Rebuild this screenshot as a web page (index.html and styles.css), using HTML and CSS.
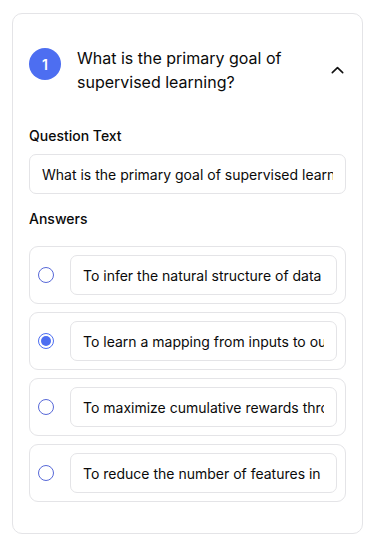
FILE: index.html
```html
<!DOCTYPE html>
<html lang="en">
<head>
<meta charset="utf-8">
<title>Question editor</title>
<link rel="stylesheet" href="styles.css">
</head>
<body>
<div class="page">
  <section class="card">
    <header class="card-header">
      <div class="header-left">
        <span class="badge">1</span>
        <h2 class="title">What is the primary goal of supervised learning?</h2>
      </div>
      <button class="toggle" type="button" aria-label="Collapse">
        <svg width="20" height="20" viewBox="0 0 20 20" fill="none" stroke="#111" stroke-width="1.6" stroke-linecap="round" stroke-linejoin="round"><path d="M6.3 12.6 L11.5 7.6 L16.7 12.6"/></svg>
      </button>
    </header>
    <div class="card-body">
      <div class="field">
        <label class="label" for="q1">Question Text</label>
        <input class="input" id="q1" type="text" readonly value="What is the primary goal of supervised learning?">
      </div>
      <div class="field">
        <label class="label">Answers</label>
        <div class="answers">
          <div class="answer">
            <span class="radio"></span>
            <input class="input" type="text" readonly value="To infer the natural structure of data">
          </div>
          <div class="answer">
            <span class="radio checked"></span>
            <input class="input" type="text" readonly value="To learn a mapping from inputs to outputs">
          </div>
          <div class="answer">
            <span class="radio"></span>
            <input class="input" type="text" readonly value="To maximize cumulative rewards through interaction">
          </div>
          <div class="answer">
            <span class="radio"></span>
            <input class="input" type="text" readonly value="To reduce the number of features in a dataset">
          </div>
        </div>
      </div>
    </div>
  </section>
</div>
</body>
</html>
```

FILE: styles.css
```css
* { box-sizing: border-box; }
html, body { margin: 0; padding: 0; background: #ffffff; }
body {
  font-family: Inter, "Noto Sans", sans-serif;
  color: #0a0a0a;
}
.page {
  padding: 13px 10px 7px 12px;
}
.card {
  border: 1px solid #e4e4e7;
  border-radius: 10px;
  background: #fff;
  padding: 32px 16px 31px 16px;
}
.card-header {
  display: flex;
  align-items: center;
  justify-content: space-between;
}
.header-left {
  display: flex;
  align-items: flex-start;
  gap: 16px;
}
.badge {
  flex: none;
  width: 32px;
  height: 32px;
  margin-top: 2px;
  border-radius: 50%;
  background: #4d6ef1;
  color: #fff;
  font-size: 14px;
  font-weight: 600;
  display: flex;
  align-items: center;
  justify-content: center;
}
.title {
  margin: 0;
  font-size: 16px;
  line-height: 24px;
  font-weight: 400;
  color: #0a0a0a;
  max-width: 230px;
}
.toggle {
  border: 0;
  background: none;
  padding: 0;
  width: 20px;
  height: 20px;
  display: flex;
}
.card-body {
  padding-top: 32px;
  display: flex;
  flex-direction: column;
  gap: 15px;
}
.field {
  display: flex;
  flex-direction: column;
  gap: 8px;
}
.label {
  font-size: 14px;
  line-height: 20px;
  font-weight: 500;
  color: #0a0a0a;
}
.input {
  display: block;
  width: 100%;
  height: 40px;
  margin: 0;
  border: 1px solid #e4e4e7;
  border-radius: 7px;
  padding: 0 12px;
  font-family: inherit;
  font-size: 14px;
  color: #0a0a0a;
  background: #fff;
  outline: none;
}
.answers {
  margin-top: 9px;
  display: flex;
  flex-direction: column;
  gap: 8px;
}
.answer {
  display: flex;
  align-items: center;
  gap: 16px;
  border: 1px solid #e4e4e7;
  border-radius: 9px;
  padding: 8px;
}
.answer .input { flex: 1; min-width: 0; }
.radio {
  flex: none;
  width: 16px;
  height: 16px;
  border-radius: 50%;
  border: 1px solid #5869d8;
  background: #fff;
  position: relative;
}
.radio.checked {
  border-color: #4d6ef1;
}
.radio.checked::after {
  content: "";
  position: absolute;
  left: 2px; top: 2px;
  width: 10px;
  height: 10px;
  border-radius: 50%;
  background: #4d6ef1;
}
```
